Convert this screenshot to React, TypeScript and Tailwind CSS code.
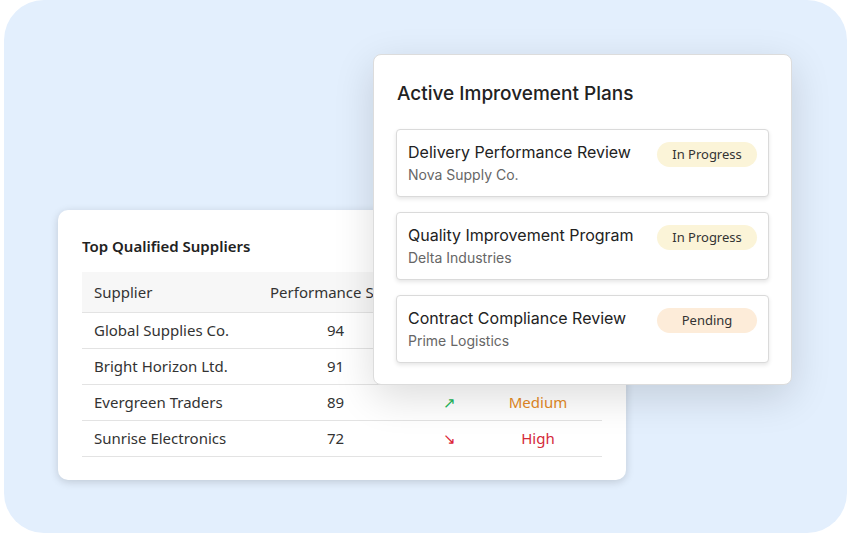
import React from "react";

const rows = [
  { name: "Global Supplies Co.", score: 94, trend: "up", risk: "Low", hidden: true },
  { name: "Bright Horizon Ltd.", score: 91, trend: "up", risk: "Low", hidden: true },
  { name: "Evergreen Traders", score: 89, trend: "up", risk: "Medium", hidden: false },
  { name: "Sunrise Electronics", score: 72, trend: "down", risk: "High", hidden: false },
];

const plans = [
  { title: "Delivery Performance Review", sub: "Nova Supply Co.", status: "In Progress" },
  { title: "Quality Improvement Program", sub: "Delta Industries", status: "In Progress" },
  { title: "Contract Compliance Review", sub: "Prime Logistics", status: "Pending" },
];

export default function App() {
  return (
    <div className="w-[848px] h-[540px] bg-white" style={{ fontFamily: '"Noto Sans", "Open Sans", sans-serif' }}>
      <div className="relative ml-[4px] w-[843px] h-[533px] rounded-[40px] bg-[#e3effd] pt-[210px] pl-[54px]">
        {/* Left card */}
        <div className="w-[568px] h-[270px] rounded-[10px] bg-white shadow-[0_2px_8px_rgba(0,0,0,0.16)] px-6 pt-[26px]">
          <div className="text-[15px] leading-[20px] font-semibold text-[#222]">Top Qualified Suppliers</div>
          <div className="mt-4 w-[520px] text-[15px] text-[#333]">
            <div className="grid grid-cols-[183px_141px_68px_128px] h-[41px] items-center bg-[#f7f7f7] border-b border-[#e3e3e3]">
              <div className="pl-3">Supplier</div>
              <div className="whitespace-nowrap pl-[5px]">Performance Score</div>
              <div />
              <div />
            </div>
            {rows.map((r) => (
              <div key={r.name} className="grid grid-cols-[183px_141px_68px_128px] h-[36px] items-center border-b border-[#e3e3e3]">
                <div className="pl-3">{r.name}</div>
                <div className="text-center">{r.score}</div>
                <div className={`text-center pl-[18px] text-[15px] ${r.trend === "up" ? "text-[#22b85a]" : "text-[#dc2638]"}`}>
                  {r.hidden ? "" : r.trend === "up" ? "↗" : "↘"}
                </div>
                <div
                  className={`text-center text-[15px] ${
                    r.risk === "High" ? "text-[#d42a3a]" : r.risk === "Medium" ? "text-[#e58a26]" : "text-[#22a35a]"
                  }`}
                >
                  {r.hidden ? "" : r.risk}
                </div>
              </div>
            ))}
          </div>
        </div>

        {/* Right card */}
        <div className="absolute left-[369px] top-[54px] w-[419px] h-[331px] rounded-[8px] border border-[#dcdcdc] bg-white shadow-[0_12px_40px_rgba(0,0,0,0.14)] px-[22px] pt-[25px]">
          <div className="text-[19px] leading-[28px] font-medium text-[#222] pl-[1px]" style={{ fontFamily: "Inter, sans-serif" }}>
            Active Improvement Plans
          </div>
          <div className="mt-[21px] flex flex-col gap-[15px]">
            {plans.map((p) => (
              <div
                key={p.title}
                className="h-[68px] rounded-[4px] border border-[#dadada] bg-white shadow-[0_2px_4px_rgba(0,0,0,0.1)] flex items-start justify-between pl-[11px] pr-[11px] pt-[12px]"
              >
                <div style={{ fontFamily: "Inter, sans-serif" }}>
                  <div className="text-[16px] leading-[20px] text-[#222]">{p.title}</div>
                  <div className="mt-[3px] text-[14px] leading-[20px] text-[#666]">{p.sub}</div>
                </div>
                <div
                  className={`w-[100px] h-[25px] rounded-full flex items-center justify-center text-[13px] text-[#333] ${
                    p.status === "Pending" ? "bg-[#fdecd9]" : "bg-[#fbf4d8]"
                  }`}
                >
                  {p.status}
                </div>
              </div>
            ))}
          </div>
        </div>
      </div>
    </div>
  );
}
